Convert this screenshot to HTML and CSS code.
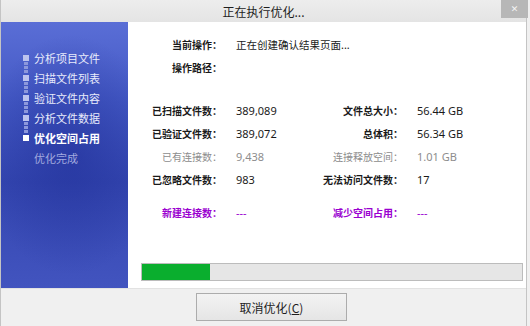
FILE: index.html
```html
<!DOCTYPE html>
<html lang="zh-CN">
<head>
  <meta charset="UTF-8" />
  <title>正在执行优化...</title>
  <link rel="stylesheet" href="styles.css">
</head>
<body>
  <div class="janela">
    <div class="barra-titulo">
      <span></span>
      <span class="titulo">正在执行优化...</span>
      <button class="fechar" aria-label="关闭">&#x2715;</button>
    </div>

    <div class="principal">
      <ul class="passos">
        <li class="feito">分析项目文件</li>
        <li class="feito">扫描文件列表</li>
        <li class="feito">验证文件内容</li>
        <li class="feito">分析文件数据</li>
        <li class="atual">优化空间占用</li>
        <li class="pendente">优化完成</li>
      </ul>

      <div class="conteudo">
        <div class="grade operacao">
          <span class="rotulo">当前操作：</span>
          <span class="valor largo">正在创建确认结果页面...</span>
          <span class="rotulo">操作路径：</span>
          <span class="valor largo"></span>
        </div>

        <div class="grade estatisticas">
          <span class="rotulo">已扫描文件数：</span>
          <span class="valor">389,089</span>
          <span class="rotulo">文件总大小：</span>
          <span class="valor">56.44 GB</span>

          <span class="rotulo">已验证文件数：</span>
          <span class="valor">389,072</span>
          <span class="rotulo">总体积：</span>
          <span class="valor">56.34 GB</span>

          <span class="rotulo cinza">已有连接数：</span>
          <span class="valor cinza">9,438</span>
          <span class="rotulo cinza">连接释放空间：</span>
          <span class="valor cinza">1.01 GB</span>

          <span class="rotulo">已忽略文件数：</span>
          <span class="valor">983</span>
          <span class="rotulo">无法访问文件数：</span>
          <span class="valor">17</span>
        </div>

        <div class="grade roxo">
          <span class="rotulo">新建连接数：</span>
          <span class="valor">---</span>
          <span class="rotulo">减少空间占用：</span>
          <span class="valor">---</span>
        </div>

        <div class="progresso">
          <div class="preenchido" style="width: 18%;"></div>
        </div>
      </div>
    </div>

    <div class="rodape">
      <button class="botao">取消优化(<u>C</u>)</button>
    </div>
  </div>
</body>
</html>
```

FILE: styles.css
```css
body {
  margin: 0;
  padding: 0;
  background: #f0f0f0;
  font-family: "Noto Sans", "Noto Sans CJK SC", sans-serif;
}
.janela {
  width: 527px;
  height: 326px;
  box-sizing: border-box;
  border-left: 1px solid #c4c4c4;
  border-right: 1px solid #c4c4c4;
  background: #f0f0f0;
  display: flex;
  flex-direction: column;
}
.barra-titulo {
  height: 22px;
  display: grid;
  grid-template-columns: 1fr auto 1fr;
  background: linear-gradient(to bottom, #ededed, #e4e4e4);
}
.titulo {
  font-family: "Noto Sans CJK SC", sans-serif;
  font-size: 12px;
  line-height: 23px;
  color: #1e1e1e;
}
.fechar {
  justify-self: end;
  align-self: start;
  width: 27px;
  height: 18px;
  margin-right: -2px;
  padding: 0;
  border: none;
  background: #b7b7b7;
  color: #f4f4f4;
  font-size: 9px;
  font-weight: bold;
  line-height: 18px;
  font-family: "DejaVu Sans", sans-serif;
}
.principal {
  height: 266px;
  display: flex;
  background: #ffffff;
}
.passos {
  width: 127px;
  margin: 0;
  padding: 26px 0 0 0;
  list-style: none;
  background:
    radial-gradient(ellipse 90px 120px at 55% 50%, rgba(30, 45, 150, 0.55), rgba(30, 45, 150, 0) 100%),
    linear-gradient(to bottom, #5a6ed6 0%, #4358c4 30%, #3446b0 60%, #4254bf 100%);
}
.passos li {
  position: relative;
  height: 20px;
  line-height: 20px;
  padding-left: 33px;
  font-family: "Noto Sans CJK SC", sans-serif;
  font-size: 11px;
  color: #e8ebfb;
}
.passos li::before {
  content: "";
  position: absolute;
  left: 22px;
  top: 7px;
  width: 6px;
  height: 6px;
  background: #bcc3ee;
}
.passos li.feito::after {
  content: "";
  position: absolute;
  left: 23px;
  top: 14px;
  width: 4px;
  height: 12px;
  background: repeating-linear-gradient(to bottom, #8d98dc 0 3px, transparent 3px 4px);
}
.passos li.atual {
  color: #ffffff;
  font-weight: bold;
}
.passos li.atual::before {
  background: #ffffff;
}
.passos li.pendente {
  color: #a2aadf;
}
.passos li.pendente::before {
  display: none;
}
.conteudo {
  flex: 1;
  display: flex;
  flex-direction: column;
  padding-top: 11px;
}
.grade {
  display: grid;
  grid-template-columns: 100px 64px 101px 1fr;
  column-gap: 8px;
  grid-auto-rows: 23px;
  align-items: center;
}
.operacao {
  grid-template-columns: 100px 1fr;
}
.estatisticas {
  margin-top: 20px;
}
.roxo {
  margin-top: 10px;
}
.rotulo {
  text-align: right;
  padding-right: 6px;
  font-family: "Noto Sans CJK SC", sans-serif;
  font-size: 10px;
  font-weight: bold;
  color: #1a1a1a;
}
.valor {
  font-size: 11px;
  color: #1a1a1a;
  white-space: nowrap;
}
.valor.largo {
  font-family: "Noto Sans CJK SC", sans-serif;
  font-size: 10.5px;
}
.cinza {
  color: #8d8d8d;
  font-weight: normal;
}
.roxo .rotulo, .roxo .valor {
  color: #9a00d0;
}
.progresso {
  margin: auto 3px 7px 13px;
  height: 18px;
  box-sizing: border-box;
  border: 1px solid #bcbcbc;
  background: #e6e6e6;
}
.preenchido {
  height: 100%;
  background: #0aae2e;
}
.rodape {
  flex: 1;
  padding: 4px 0 0 195px;
  border-top: 1px solid #e2e2e2;
}
.botao {
  width: 151px;
  height: 28px;
  border: 1px solid #acacac;
  background: linear-gradient(to bottom, #f3f3f3, #e5e5e5);
  font-family: "Noto Sans CJK SC", sans-serif;
  font-size: 12px;
  color: #1e1e1e;
  padding: 0;
}
```
